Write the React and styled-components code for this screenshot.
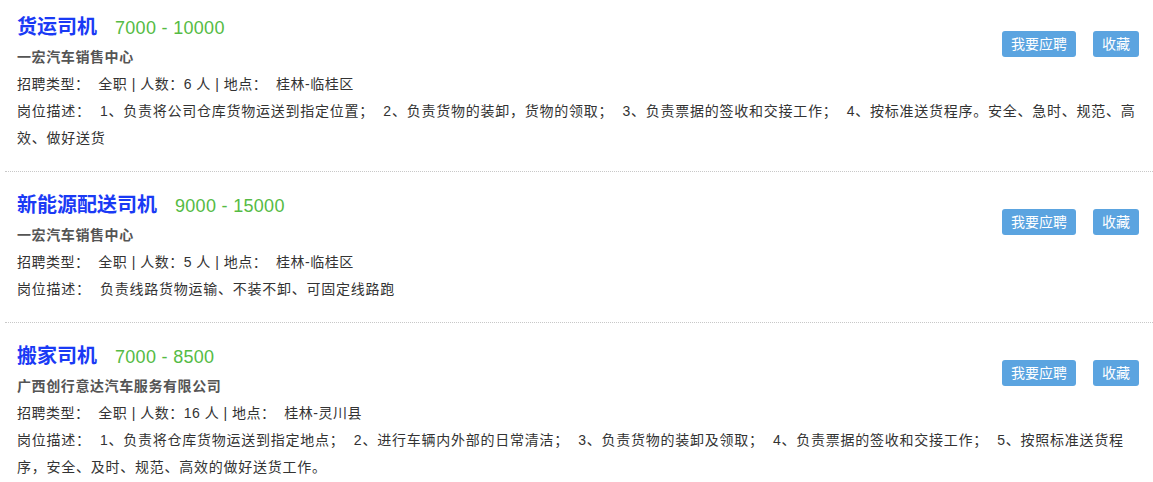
import React from 'react';
import styled, { createGlobalStyle } from 'styled-components';

const GlobalStyle = createGlobalStyle`
  body {
    margin: 0;
    background: #ffffff;
    font-family: "Liberation Sans", "Noto Sans CJK SC", sans-serif;
    color: #333333;
  }
`;

const JobList = styled.div`
  width: 100%;
`;

const JobItem = styled.div`
  margin-left: 5px;
  padding: 18px 5px 19px 12px;
  border-bottom: 1px dotted #c8c8c8;

  &:first-child {
    padding-top: 12px;
  }

  &:last-child {
    border-bottom: none;
  }
`;

const TopRow = styled.div`
  display: flex;
  justify-content: space-between;
  align-items: flex-start;
`;

const TitleLine = styled.div`
  display: flex;
  align-items: baseline;
  gap: 18px;
  line-height: 30px;
`;

const JobTitle = styled.span`
  font-size: 20px;
  font-weight: bold;
  color: #1a3af5;
`;

const Salary = styled.span`
  font-size: 18px;
  letter-spacing: 0.3px;
  color: #55bb44;
`;

const Company = styled.div`
  font-size: 14px;
  font-weight: bold;
  letter-spacing: 0.6px;
  line-height: 28px;
  color: #555555;
`;

const Info = styled.div`
  font-size: 14px;
  line-height: 27px;
  letter-spacing: 0.5px;
  color: #333333;
`;

const Desc = styled.div`
  font-size: 14px;
  line-height: 27px;
  letter-spacing: 0.75px;
  color: #333333;
`;

const Actions = styled.div`
  display: flex;
  gap: 17px;
  margin-top: 19px;
  margin-right: 9px;
`;

const ActionButton = styled.button`
  all: unset;
  height: 26px;
  line-height: 26px;
  padding: 0 9px;
  font-size: 14px;
  color: #ffffff;
  background: #5ba4e0;
  border-radius: 3px;
  cursor: pointer;
`;

const GAP = '\u00a0 ';

const jobs = [
  {
    title: '货运司机',
    salary: '7000 - 10000',
    company: '一宏汽车销售中心',
    count: 6,
    place: '桂林-临桂区',
    desc: [
      '1、负责将公司仓库货物运送到指定位置；',
      '2、负责货物的装卸，货物的领取；',
      '3、负责票据的签收和交接工作；',
      '4、按标准送货程序。安全、急时、规范、高效、做好送货',
    ],
  },
  {
    title: '新能源配送司机',
    salary: '9000 - 15000',
    company: '一宏汽车销售中心',
    count: 5,
    place: '桂林-临桂区',
    desc: ['负责线路货物运输、不装不卸、可固定线路跑'],
  },
  {
    title: '搬家司机',
    salary: '7000 - 8500',
    company: '广西创行意达汽车服务有限公司',
    count: 16,
    place: '桂林-灵川县',
    desc: [
      '1、负责将仓库货物运送到指定地点；',
      '2、进行车辆内外部的日常清洁；',
      '3、负责货物的装卸及领取；',
      '4、负责票据的签收和交接工作；',
      '5、按照标准送货程序，安全、及时、规范、高效的做好送货工作。',
    ],
  },
];

export default function App() {
  return (
    <>
      <GlobalStyle />
      <JobList>
        {jobs.map((job, index) => (
          <JobItem key={index}>
            <TopRow>
              <div>
                <TitleLine>
                  <JobTitle>{job.title}</JobTitle>
                  <Salary>{job.salary}</Salary>
                </TitleLine>
                <Company>{job.company}</Company>
                <Info>
                  {`招聘类型：${GAP}全职 | 人数：${job.count} 人 | 地点：${GAP}${job.place}`}
                </Info>
              </div>
              <Actions>
                <ActionButton>我要应聘</ActionButton>
                <ActionButton>收藏</ActionButton>
              </Actions>
            </TopRow>
            <Desc>{`岗位描述：${GAP}${job.desc.join(GAP)}`}</Desc>
          </JobItem>
        ))}
      </JobList>
    </>
  );
}
